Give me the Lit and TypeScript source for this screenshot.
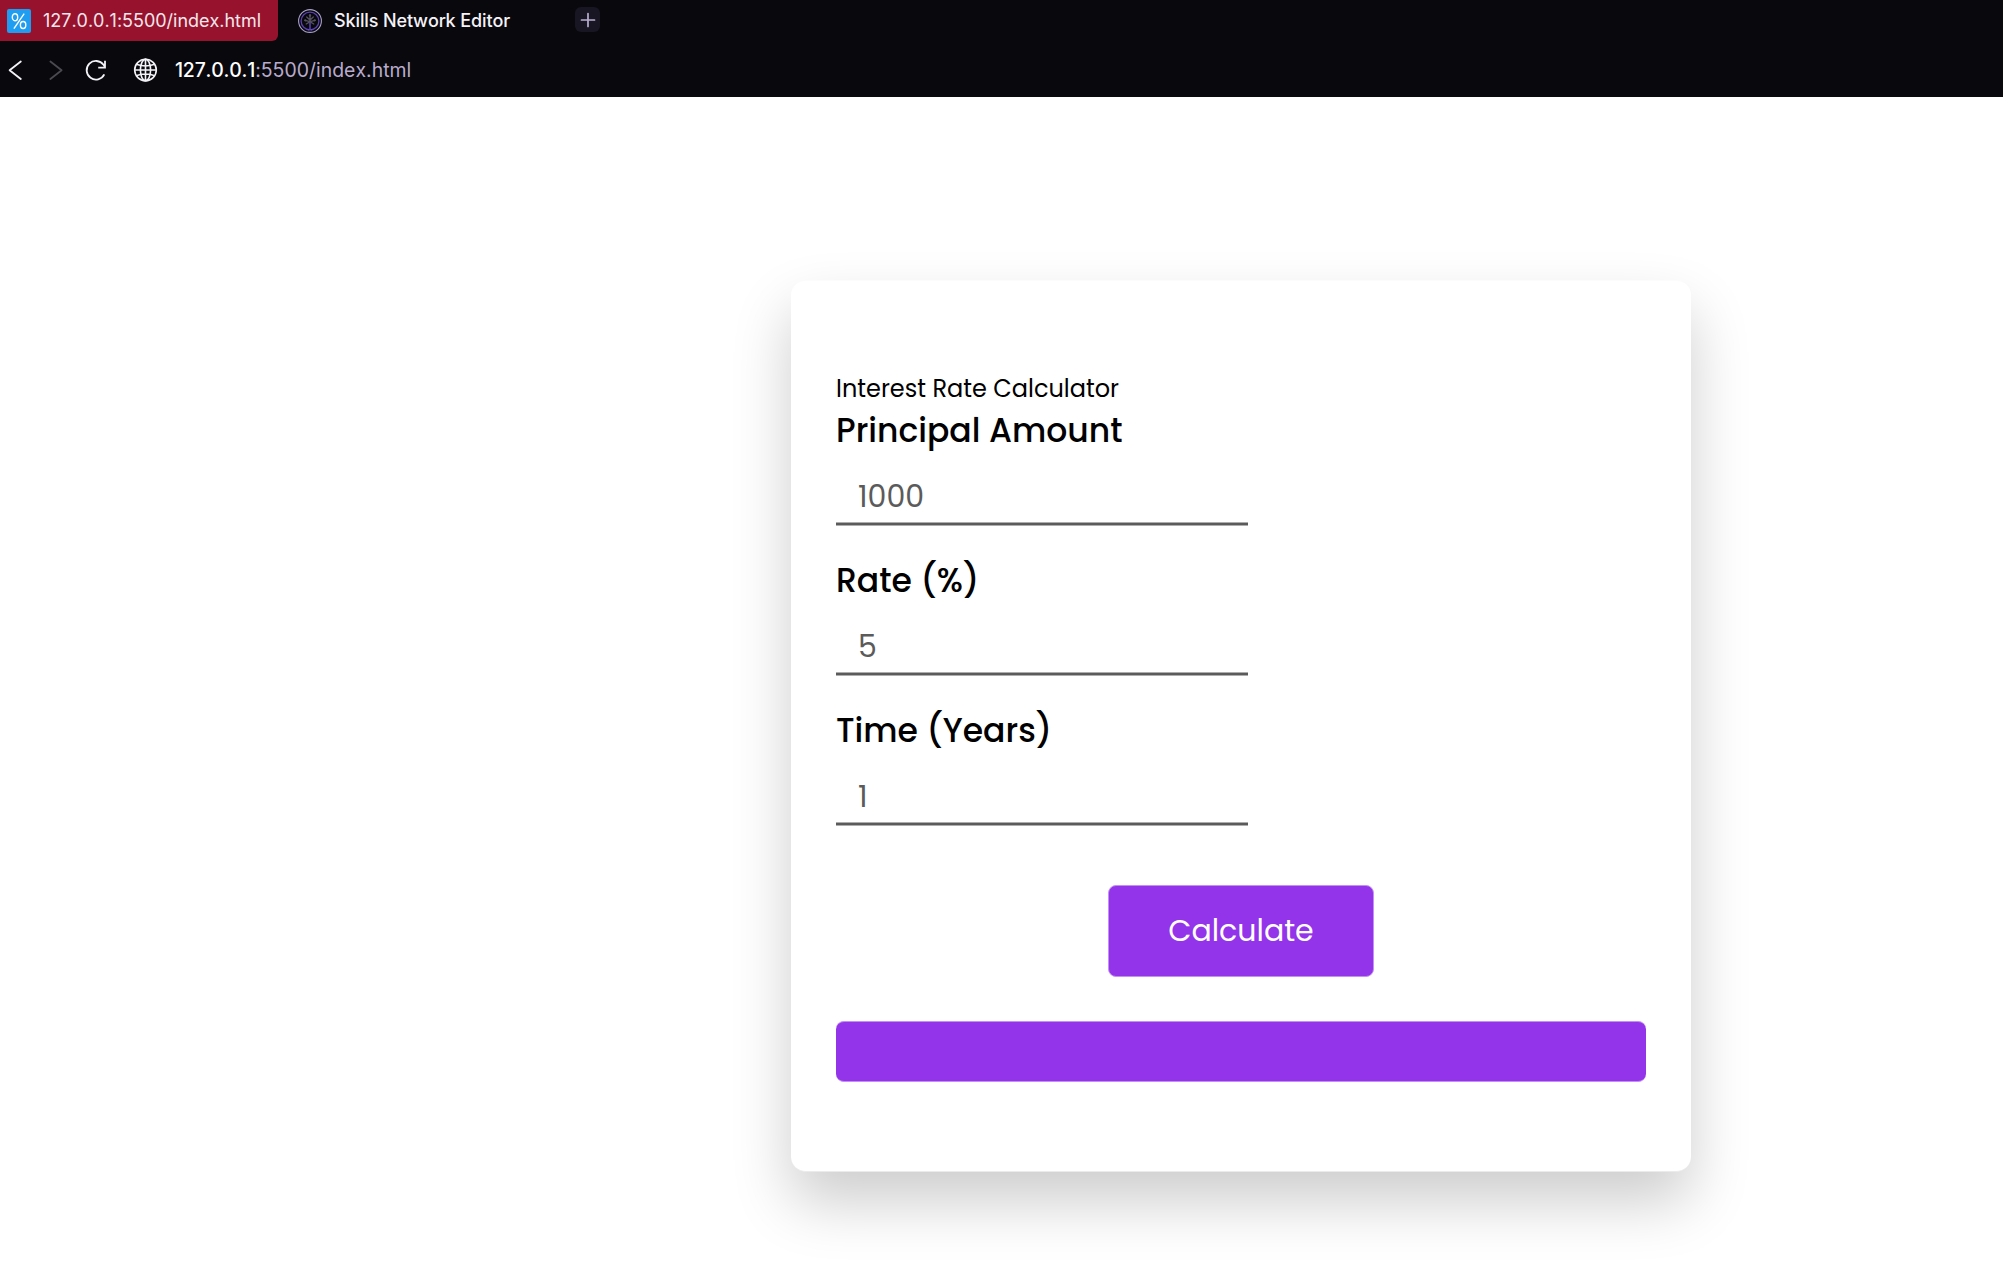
import { LitElement, html, css } from "lit";
import { customElement } from "lit/decorators.js";

interface Field {
  label: string;
  placeholder: string;
  id: string;
}

@customElement("browser-bar")
export class BrowserBar extends LitElement {
  static styles = css`
    :host {
      display: block;
      height: 97px;
      box-sizing: border-box;
      background: #09080d;
      font-family: Inter, sans-serif;
      font-kerning: none;
    }
    svg {
      display: block;
      flex: none;
    }
    .tabs {
      display: flex;
      align-items: flex-start;
      height: 42px;
    }
    .tab {
      display: flex;
      align-items: center;
      height: 42px;
      box-sizing: border-box;
      font-size: 18px;
      line-height: 24px;
      white-space: nowrap;
    }
    .active {
      width: 278px;
      height: 41px;
      padding: 1px 0 0 7px;
      gap: 12px;
      background: #97122d;
      border-bottom-right-radius: 6px;
      color: #f4e6ec;
      letter-spacing: -0.02px;
    }
    .idle {
      width: 297px;
      padding-left: 20px;
      gap: 12px;
      color: #f4f2f8;
      font-weight: 500;
      letter-spacing: -0.1px;
    }
    .plus {
      display: flex;
      align-items: center;
      justify-content: center;
      width: 25px;
      height: 25px;
      margin-top: 7px;
      border-radius: 6px;
      background: #181622;
    }
    .nav {
      display: flex;
      align-items: center;
      height: 55px;
    }
    .controls {
      display: flex;
      width: 175px;
    }
    .address {
      font-size: 19.4px;
      line-height: 24px;
      letter-spacing: 0.03px;
      color: #b8abcc;
      white-space: nowrap;
    }
    .host {
      color: #fff;
      font-weight: 500;
      letter-spacing: -0.18px;
    }
  `;

  render() {
    return html`
      <div class="tabs">
        <div class="tab active">
          <svg width="24" height="24" viewBox="0 0 24 24" fill="none" stroke="#fff">
            <rect width="24" height="24" rx="2" fill="#1f9df1" stroke="none" />
            <path d="M17.2 4.6 6.9 19.6" stroke-width="1.4" />
            <ellipse cx="8" cy="8.2" rx="2.7" ry="3.5" stroke-width="1.4" />
            <ellipse cx="16.1" cy="16" rx="2.7" ry="3.5" stroke-width="1.4" />
          </svg>
          <span class="title">127.0.0.1:5500/index.html</span>
        </div>
        <div class="tab idle">
          <svg width="24" height="24" viewBox="0 0 24 24" fill="none">
            <circle cx="12" cy="12" r="11.4" stroke="#aaa0c8" stroke-width="1.1" />
            <circle cx="12" cy="12" r="8.9" stroke="#5a42ae" stroke-width="1.3" />
            <g stroke="#55515f" stroke-width="1.3" stroke-linecap="round">
              <path d="M12 6v7M8.7 8l3.3 3 3.3-3M6.9 11.3l5.1 1.4 5.1-1.4M8.2 15l3.8-2.2 3.8 2.2" />
              <circle cx="12" cy="6.4" r="0.6" />
              <circle cx="7.3" cy="11.3" r="0.5" />
              <circle cx="16.7" cy="11.3" r="0.5" />
            </g>
            <path d="M12 13.5v7M9.8 20.8h1.4M12.8 20.8h1.4" stroke="#6248c4" stroke-width="1.4" />
          </svg>
          <span>Skills Network Editor</span>
        </div>
        <div class="plus">
          <svg width="16" height="16" viewBox="0 0 16 16" stroke="#b9aed2" stroke-width="1.7" stroke-linecap="round">
            <path d="M8 1.5v13M1.5 8h13" />
          </svg>
        </div>
      </div>
      <div class="nav">
        <div class="controls">
          <svg width="174" height="30" viewBox="0 0 174 30" fill="none" stroke="#f3f2f6" stroke-width="1.8" stroke-linecap="round" stroke-linejoin="round">
            <path d="M20.8 6.5 9.6 15.3l11.2 8.7" />
            <path d="M50.4 6.5 61.6 15.3 50.4 24" stroke="#4b4a50" />
            <path d="M104.3 19.4A9.3 9.3 0 1 1 103.5 9.8l1.2 1.6M105 5.7v6.9h-6.8" stroke-linecap="butt" stroke-linejoin="miter" />
            <g stroke-width="1.6">
              <circle cx="145.5" cy="15" r="10.8" />
              <ellipse cx="145.5" cy="15" rx="5.1" ry="10.8" />
              <path d="M145.5 4.2v21.6M134.7 15h21.6M137 9.6c5 1.7 12 1.7 17 0M137 20.4c5-1.7 12-1.7 17 0" />
            </g>
          </svg>
        </div>
        <div class="address"><span class="host">127.0.0.1</span><span>:5500/index.html</span></div>
      </div>
    `;
  }
}

@customElement("interest-calculator")
export class InterestCalculator extends LitElement {
  static styles = css`
    :host {
      display: block;
      box-sizing: border-box;
      width: 900px;
      padding: 89px 45px;
      background: #fff;
      border: solid #fcfcfc;
      border-width: 1px 0;
      border-bottom-color: #ebebeb;
      border-radius: 15px;
      box-shadow: 0 30px 60px rgba(0, 0, 0, 0.2);
      font-family: Poppins, Inter, sans-serif;
      color: #000;
    }
    .heading {
      margin: 0;
      height: 36px;
      font-size: 24px;
      font-weight: 400;
      line-height: 37px;
    }
    .field {
      width: 412px;
      height: 120px;
      margin-bottom: 30px;
    }
    .field:last-of-type {
      margin-bottom: 0;
    }
    .label {
      display: block;
      height: 48px;
      font-size: 33px;
      font-weight: 500;
      line-height: 50px;
      white-space: nowrap;
    }
    .input {
      display: block;
      box-sizing: border-box;
      width: 412px;
      height: 68px;
      margin: 0;
      padding: 17px 22px 0;
      border: 0;
      outline: 0;
      background: transparent;
      font: inherit;
      font-size: 30px;
      line-height: 51px;
      color: #5b5b5b;
    }
    .input::placeholder {
      color: #5b5b5b;
      opacity: 1;
    }
    .rule {
      height: 2px;
      border-top: 1px solid #adadad;
      border-bottom: 1px solid #adadad;
      background: #5b5b5b;
    }
    .calculate {
      display: block;
      box-sizing: border-box;
      width: 266px;
      height: 92px;
      margin: 59px 0 44px 272px;
      padding: 0;
      border: 1px solid #c38ff3;
      border-radius: 8px;
      background: #9333ea;
      font: inherit;
      font-size: 30px;
      line-height: 90px;
      color: #fff;
    }
    .result {
      box-sizing: border-box;
      height: 61px;
      border: solid #c38ff3;
      border-width: 1px 0;
      border-radius: 8px;
      background: #9333ea;
    }
  `;

  private fields: Field[] = [
    { label: "Principal Amount", placeholder: "1000", id: "principal" },
    { label: "Rate (%)", placeholder: "5", id: "rate" },
    { label: "Time (Years)", placeholder: "1", id: "time" },
  ];

  render() {
    return html`
      <p class="heading">Interest Rate Calculator</p>
      <form>
        ${this.fields.map(
          (f) => html`
            <div class="field">
              <label class="label" for=${f.id}>${f.label}</label>
              <input class="input" id=${f.id} placeholder=${f.placeholder} />
              <div class="rule"></div>
            </div>
          `
        )}
        <button class="calculate" type="button">Calculate</button>
      </form>
      <div class="result"></div>
    `;
  }
}

@customElement("app-root")
export class AppRoot extends LitElement {
  static styles = css`
    :host {
      display: block;
      height: 1279px;
      overflow: hidden;
      background: #fff;
    }
    .page {
      padding: 183px 0 0 791px;
    }
  `;

  render() {
    return html`
      <browser-bar></browser-bar>
      <main class="page"><interest-calculator></interest-calculator></main>
    `;
  }
}
